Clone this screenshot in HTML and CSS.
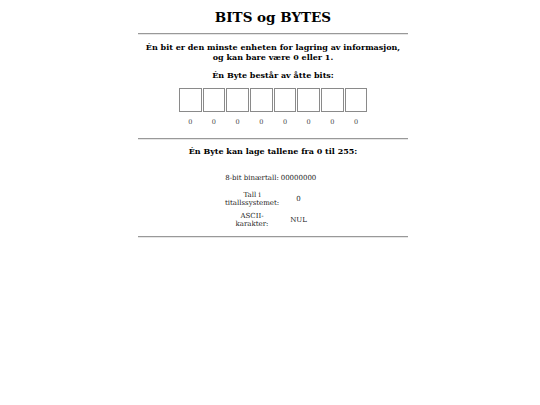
FILE: index.html
```html
<!DOCTYPE html>
<html lang="no">
<head>
<meta charset="utf-8">
<title>BITS og BYTES</title>
<link rel="stylesheet" href="styles.css">
</head>
<body>
<main class="page">
  <h1 class="title">BITS og BYTES</h1>
  <hr class="rule">
  <p class="intro">Én bit er den minste enheten for lagring av informasjon,<br>og kan bare være 0 eller 1.</p>
  <p class="lead">Én Byte består av åtte bits:</p>
  <div class="bits">
    <div class="bit"><span class="box"></span><span class="digit">0</span></div>
    <div class="bit"><span class="box"></span><span class="digit">0</span></div>
    <div class="bit"><span class="box"></span><span class="digit">0</span></div>
    <div class="bit"><span class="box"></span><span class="digit">0</span></div>
    <div class="bit"><span class="box"></span><span class="digit">0</span></div>
    <div class="bit"><span class="box"></span><span class="digit">0</span></div>
    <div class="bit"><span class="box"></span><span class="digit">0</span></div>
    <div class="bit"><span class="box"></span><span class="digit">0</span></div>
  </div>
  <hr class="rule rule-mid">
  <p class="lead lead-2">Én Byte kan lage tallene fra 0 til 255:</p>
  <table class="values">
    <tr><td class="label">8-bit binærtall:</td><td class="value">00000000</td></tr>
    <tr><td class="label">Tall i titallssystemet:</td><td class="value">0</td></tr>
    <tr><td class="label">ASCII-karakter:</td><td class="value">NUL</td></tr>
  </table>
  <hr class="rule rule-end">
</main>
</body>
</html>
```

FILE: styles.css
```css
html, body {
  margin: 0;
  padding: 0;
  background: #ffffff;
}

.page {
  width: 270px;
  margin-left: 138px;
  font-family: "DejaVu Serif", serif;
  color: #000;
}

.title {
  margin: 9px 0 0;
  font-size: 13.5px;
  line-height: 16px;
  font-weight: bold;
  text-align: center;
}

.rule {
  height: 0;
  margin: 8px 0 0;
  border: 0;
  border-top: 1px solid #999;
  border-bottom: 1px solid #e6e6e6;
}

.intro {
  margin: 7px 0 0;
  font-size: 8px;
  line-height: 10px;
  font-weight: bold;
  text-align: center;
}

.lead {
  margin: 8px 0 0;
  font-size: 8px;
  line-height: 10px;
  font-weight: bold;
  text-align: center;
}

.bits {
  display: flex;
  gap: 1.2px;
  margin: 8px 0 0 41px;
}

.bit {
  display: flex;
  flex-direction: column;
  align-items: center;
}

.box {
  display: block;
  width: 22.5px;
  height: 23.5px;
  box-sizing: border-box;
  border: 1px solid #8a8a8a;
  background: #fff;
}

.digit {
  display: block;
  margin-top: 6.5px;
  font-size: 6.5px;
  line-height: 8px;
  color: #444;
}

.rule-mid {
  margin-top: 11.5px;
}

.lead-2 {
  margin-top: 6.5px;
}

.values {
  margin: 11.5px 0 0 87px;
  border-collapse: collapse;
  table-layout: fixed;
  width: 93px;
  font-size: 7px;
  line-height: 8.5px;
  color: #222;
}

.values td {
  height: 21px;
  padding: 0;
  text-align: center;
  vertical-align: middle;
}

.values .label {
  width: 54px;
}

.values .value {
  width: 39px;
}

.values tr:first-child .label {
  white-space: nowrap;
}

.rule-end {
  margin-top: 5px;
}
```
